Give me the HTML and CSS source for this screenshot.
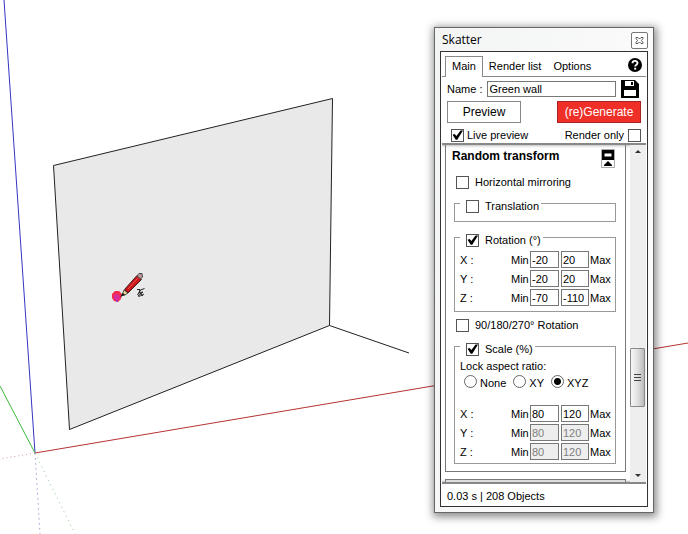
FILE: index.html
```html
<!DOCTYPE html>
<html lang="en">
<head>
<meta charset="utf-8">
<title>Skatter</title>
<link rel="stylesheet" href="styles.css">
</head>
<body>
<svg class="scene" viewBox="0 0 688 534" preserveAspectRatio="xMinYMin slice" aria-hidden="true">
  <path d="M4 0L35 453" stroke="#3434c4"/>
  <path d="M0 386L35 453" stroke="#3db83d"/>
  <path d="M35 453L688 343" stroke="#b83232"/>
  <path d="M35 453L0 459" stroke="#cc9a9a" stroke-dasharray="1 3"/>
  <path d="M35 453L40 534" stroke="#b4b4dd" stroke-dasharray="2 3"/>
  <path d="M35 453L75 534" stroke="#8cc88c" stroke-dasharray="1 4"/>
  <path d="M53.500 165.500L332.500 98.500L329.500 325.500L69.500 429.500Z" fill="#e9e9e9" stroke="#222"/>
  <path d="M329.500 325.500L409 353" stroke="#222"/>
  <g>
    <path d="M112 294l3-3 4 0 3 3-1 5-3 3-4-1-2-3z" fill="#f42b4c"/>
    <path d="M114 295l4-1 2 4-3 3-3-2z" fill="#d52ca0"/>
    <path d="M116 301h2" stroke="#73f"/>
    <path d="M122 295l2-5 4 3-3 2z" fill="#ead49a" stroke="#554"/>
    <path d="M120 297l3-4 2 2z" fill="#111"/>
    <path d="M124.500 289.500L137 275.500L141.500 279.500L128 293Z" fill="#c91418" stroke="#3c2222"/>
    <path d="M128 289L138 278" stroke="#f0504e"/>
    <path d="M137 276l2-2.500h3l.5 3.500-2 2z" fill="#b99" stroke="#444"/>
    <path d="M137 289.500h3l-1 3-1.500 2.500M144.500 288.500l-4 1.500-1.500 3 4-1M143 292l-5 4c1 1 4-1 6-2M140 293l3 3" fill="none" stroke="#222"/>
  </g>
</svg>

<main class="window">
  <header class="titlebar">
    <h1>Skatter</h1>
    <button class="close" aria-label="Close"><svg width="9" height="9" viewBox="0 0 9 9"><path d="M1 1.500h2l1.500 1.500L6 1.500h2v1L6.500 4.500L8 6.500v1H6L4.500 6L3 7.500H1v-1L2.500 4.500L1 2.500z" fill="#fff" stroke="#555"/></svg></button>
  </header>
  <div class="pane">
    <nav class="tabs">
      <button class="tab active">Main</button>
      <button class="tab">Render list</button>
      <button class="tab">Options</button>
      <button class="icon help" aria-label="Help"><svg width="14" height="14" viewBox="0 0 14 14"><circle cx="7" cy="7" r="7"/><path d="M4.500 5.200C4.600 2.200 9.500 2.200 9.500 5C9.500 6.600 7.200 6.700 7.200 8.500" fill="none" stroke="#fff" stroke-width="1.900"/><path d="M6.200 9.700h2v1.900h-2z" fill="#fff"/></svg></button>
    </nav>
    <div class="name-row">
      <label for="name">Name :</label>
      <input id="name" class="field" type="text" value="Green wall">
      <button class="icon" aria-label="Save"><svg width="18" height="18" viewBox="0 0 18 18"><path d="M0 0h14l4 4v14H0z"/><path d="M4 1h9v5H4zM3 10h12v6H3z" fill="#fff"/><path d="M10 2h2v3h-2z"/></svg></button>
    </div>
    <div class="actions">
      <button class="preview">Preview</button>
      <button class="generate">(re)Generate</button>
    </div>
    <div class="toggles">
      <label class="check"><input type="checkbox" checked>Live preview</label>
      <label class="check last">Render only<input type="checkbox"></label>
    </div>
    <div class="viewport">
      <div class="content">
        <section class="panel">
          <div class="panel-head">
            <h2>Random transform</h2>
            <button class="icon" aria-label="Collapse"><svg width="14" height="20" viewBox="0 0 14 20"><path d="M.5.500h13v18H.500z" fill="#fff" stroke="#aaa"/><path d="M1 1h12v10H1z"/><path d="M3.500 4.500h7v3h-7z" fill="#fff"/><path d="M3 17v-1l4-4 4 4v1z"/></svg></button>
          </div>
          <label class="check wide row"><input type="checkbox">Horizontal mirroring</label>
          <fieldset class="translation">
            <legend><label class="check wide"><input type="checkbox">Translation</label></legend>
          </fieldset>
          <fieldset class="rotation">
            <legend><label class="check wide"><input type="checkbox" checked>Rotation (°)</label></legend>
            <div class="range"><span>X :</span><label for="rx1">Min</label><input id="rx1" class="field" value="-20"><input id="rx2" class="field" value="20"><label for="rx2">Max</label></div>
            <div class="range"><span>Y :</span><label for="ry1">Min</label><input id="ry1" class="field" value="-20"><input id="ry2" class="field" value="20"><label for="ry2">Max</label></div>
            <div class="range"><span>Z :</span><label for="rz1">Min</label><input id="rz1" class="field" value="-70"><input id="rz2" class="field" value="-110"><label for="rz2">Max</label></div>
          </fieldset>
          <label class="check wide row"><input type="checkbox">90/180/270° Rotation</label>
          <fieldset class="scale">
            <legend><label class="check wide"><input type="checkbox" checked>Scale (%)</label></legend>
            <p>Lock aspect ratio:</p>
            <div class="radios">
              <label><input type="radio" name="lock">None</label>
              <label><input type="radio" name="lock">XY</label>
              <label><input type="radio" name="lock" checked>XYZ</label>
            </div>
            <div class="range"><span>X :</span><label for="sx1">Min</label><input id="sx1" class="field" value="80"><input id="sx2" class="field" value="120"><label for="sx2">Max</label></div>
            <div class="range"><span>Y :</span><label for="sy1">Min</label><input id="sy1" class="field" value="80" disabled><input id="sy2" class="field" value="120" disabled><label for="sy2">Max</label></div>
            <div class="range"><span>Z :</span><label for="sz1">Min</label><input id="sz1" class="field" value="80" disabled><input id="sz2" class="field" value="120" disabled><label for="sz2">Max</label></div>
          </fieldset>
        </section>
        <section class="next-panel"></section>
      </div>
      <div class="scrollbar">
        <svg width="16" height="16" viewBox="0 0 16 16"><path d="M5 8l3-3 3 3z" fill="#333"/></svg>
        <div class="track-top"></div>
        <div class="thumb"><i></i><i></i><i></i></div>
        <div class="track-bottom"></div>
        <svg width="16" height="16" viewBox="0 0 16 16"><path d="M5 8h6l-3 3z" fill="#333"/></svg>
      </div>
    </div>
    <footer class="status">0.03 s | 208 Objects</footer>
  </div>
</main>
</body>
</html>
```
FILE: styles.css
```css
* { box-sizing: border-box; }

body {
  margin: 0;
  min-height: 100vh;
  overflow: hidden;
  background: #fff;
  color: #000;
  font: 11px/14px "Liberation Sans", Arial, sans-serif;
}

button, input { font: inherit; color: inherit; margin: 0; }
button { padding: 0; }
h1, h2, p { margin: 0; }

.scene {
  display: block;
  width: 100vw;
  height: 100vh;
}

.window {
  position: absolute;
  top: 27px;
  left: 434px;
  width: 220px;
  padding: 0 5px 5px;
  border: 1px solid #666;
  background: linear-gradient(100deg, #f3f4f4, #fdfdfd);
  box-shadow: 1px 2px 8px 2px rgba(0, 0, 0, .45);
}

.titlebar {
  display: flex;
  justify-content: space-between;
  align-items: center;
  height: 23px;
  padding-left: 2px;
}

.titlebar h1 {
  font: 12px/16px "Open Sans", "Noto Sans", sans-serif;
}

.close {
  display: flex;
  align-items: center;
  justify-content: center;
  width: 17px;
  height: 17px;
  margin-top: 2px;
  border: 1px solid #777;
  border-radius: 2px;
  background: #fff;
}

.pane {
  border: 1px solid #333;
  background: #fff;
}

.icon {
  border: 0;
  background: none;
}

.icon svg { display: block; }

.tabs {
  display: flex;
  height: 25px;
  margin: 0 1px;
  padding: 4px 3px 0;
  border-bottom: 1px solid #888;
}

.tab {
  height: 20px;
  padding: 0 6px;
  border: 0;
  background: none;
}

.tab.active {
  height: 21px;
  padding-bottom: 2px;
  border: 1px solid #888;
  border-bottom: 0;
  background: #fff;
}

.help {
  align-self: flex-start;
  margin: 2px 1px 0 auto;
}

.name-row {
  display: flex;
  align-items: center;
  gap: 5px;
  padding: 3px 8px 0 6px;
}

.field {
  min-width: 0;
  height: 17px;
  padding: 0 1px;
  border: 1px solid #777;
  border-radius: 0;
  background: #fff;
}

.field:disabled {
  background: #eee;
  color: #808080;
}

.name-row .field {
  flex: 1;
  height: 16px;
}

.actions {
  display: flex;
  justify-content: space-between;
  padding: 3px 6px 0;
}

.preview, .generate {
  width: 74px;
  height: 22px;
  border: 1px solid #888;
  background: #fff;
  font-size: 12px;
}

.generate {
  width: 84px;
  border-color: #a22;
  background: #ee3028;
  color: #fff;
}

.toggles {
  display: flex;
  justify-content: space-between;
  padding: 5px 6px 1px 10px;
}

.check {
  display: flex;
  align-items: center;
  gap: 3px;
  height: 14px;
  white-space: nowrap;
}

.check.wide { gap: 6px; }
.check.last { gap: 4px; }

input[type="checkbox"] {
  appearance: none;
  flex: none;
  width: 13px;
  height: 13px;
  border: 1px solid #555;
  background: #fff;
}

input[type="checkbox"]:checked::before {
  content: "";
  display: block;
  width: 11px;
  height: 11px;
  background: #000;
  clip-path: polygon(5% 48%, 24% 40%, 40% 60%, 78% 10%, 100% 10%, 48% 94%, 34% 94%);
}

.viewport {
  display: flex;
  justify-content: space-between;
  height: 341px;
  margin: 0 1px;
  border-top: 2px solid #888;
  border-bottom: 2px solid #888;
  overflow: hidden;
}

.content {
  flex: 1;
  padding: 0 4px 0 3px;
  box-shadow: inset 0 4px 3px -3px #bbb, inset 0 -3px 2px -2px #bbb;
}

.panel {
  padding: 4px 10px 7px 6px;
  border: 1px solid #777;
  border-top: 0;
}

.panel-head {
  display: flex;
  justify-content: space-between;
  height: 20px;
}

.panel-head h2 {
  font-size: 12px;
  line-height: 15px;
}

.row { margin: 6px 0 10px 4px; }

fieldset {
  min-width: 0;
  margin: 0 -1px 0 2px;
  border: 1px solid #999;
}

legend {
  height: 9px;
  padding: 0 2px 0 6px;
}

.translation {
  margin-bottom: 11px;
  padding: 0 0 13px 5px;
}

.rotation { padding: 9px 0 5px 5px; }
.scale { padding: 8px 0 3px 5px; }

.range {
  display: grid;
  grid-template-columns: 51px 19px 29px 28px 1fr;
  align-items: center;
}

.range + .range { margin-top: 2px; }
.range .field + .field { margin-left: 2px; margin-right: -2px; }
.range label:last-child { padding-left: 3px; }

.radios {
  display: flex;
  gap: 7px;
  margin: 2px 0 16px 4px;
}

.radios label {
  display: flex;
  align-items: flex-end;
  gap: 3px;
  height: 14px;
  line-height: 11px;
}

input[type="radio"] {
  appearance: none;
  align-self: flex-start;
  width: 13px;
  height: 13px;
  border: 1px solid #666;
  border-radius: 50%;
  background: #fff;
}

input[type="radio"]:checked {
  background: radial-gradient(circle, #000 0 3px, #fff 4px);
}

.next-panel {
  height: 20px;
  margin-top: 7px;
  border: 1px solid #777;
  background: #ddd;
}

.scrollbar {
  display: flex;
  flex-direction: column;
  width: 16px;
  background: #eee;
}

.scrollbar svg { flex: none; }
.track-top { flex: 187; }
.track-bottom { flex: 59; }

.thumb {
  display: flex;
  flex-direction: column;
  align-items: center;
  justify-content: center;
  gap: 2px;
  height: 59px;
  margin-right: 1px;
  border: 1px solid #888;
  border-radius: 1px;
  background: linear-gradient(90deg, #f7f7f7, #e0e0e0 50%, #bbb);
}

.thumb i {
  width: 7px;
  height: 1px;
  background: #444;
}

.status {
  height: 22px;
  padding: 5px 6px;
}
```
